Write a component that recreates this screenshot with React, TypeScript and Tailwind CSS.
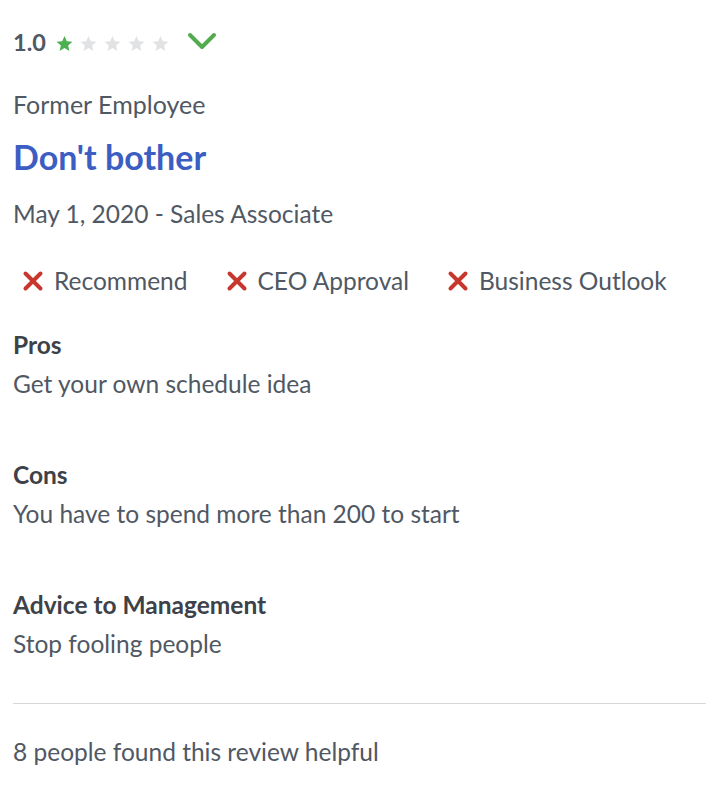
import React from "react";

function Star({ filled }: { filled: boolean }) {
  return (
    <svg width="19" height="19" viewBox="0 0 24 24" className={filled ? "fill-[#4caf50]" : "fill-[#e0e2e4]"}>
      <path d="M12 2.5l2.9 6.6 7.1.6-5.4 4.7 1.6 7-6.2-3.8-6.2 3.8 1.6-7L2 9.7l7.1-.6z" />
    </svg>
  );
}

function Cross() {
  return (
    <svg width="24" height="24" viewBox="0 0 24 24" className="stroke-[#c8372d]" fill="none" strokeWidth="4" strokeLinecap="round">
      <path d="M4.5 4.5l15 15M19.5 4.5l-15 15" />
    </svg>
  );
}

const sections = [
  { title: "Pros", body: "Get your own schedule idea" },
  { title: "Cons", body: "You have to spend more than 200 to start" },
  { title: "Advice to Management", body: "Stop fooling people" },
];

export default function App() {
  return (
    <div className="w-[706px] min-h-[797px] bg-white pl-[13px] pt-[28px] font-['Lato','Liberation_Sans',sans-serif] text-[#505863]">
      <div className="flex items-center h-[30px]">
        <span className="text-[23.5px] font-bold text-[#505863] mr-[9px]">1.0</span>
        <div className="flex items-center gap-[5px]">
          {[0, 1, 2, 3, 4].map((i) => (
            <Star key={i} filled={i === 0} />
          ))}
        </div>
        <svg width="30" height="20" viewBox="0 0 30 20" className="ml-[17px] -mt-[4px]" fill="none" stroke="#52ab4c" strokeWidth="4" strokeLinecap="round" strokeLinejoin="round">
          <path d="M3 4l12 12L27 4" />
        </svg>
      </div>

      <div className="mt-[31px] text-[25px] leading-[30px]">Former Employee</div>
      <h1 className="mt-[18px] text-[34px] leading-[40px] font-bold text-[#3c5dc1]">Don't bother</h1>
      <div className="mt-[22px] text-[24.5px] leading-[30px]">May 1, 2020 - Sales Associate</div>

      <div className="mt-[37px] flex items-center gap-[37px] pl-[8px] text-[24.5px] leading-[30px]">
        {["Recommend", "CEO Approval", "Business Outlook"].map((t) => (
          <div key={t} className="flex items-center gap-[9px]">
            <Cross />
            <span>{t}</span>
          </div>
        ))}
      </div>

      <div className="mt-[34px] flex flex-col gap-[61px]">
        {sections.map((s) => (
          <div key={s.title}>
            <div className="text-[24.5px] leading-[30px] font-bold text-[#3d4249]">{s.title}</div>
            <div className="mt-[9px] text-[24.5px] leading-[30px]">{s.body}</div>
          </div>
        ))}
      </div>

      <hr className="mt-[44px] border-t border-[#d6d8da]" />
      <div className="mt-[33px] text-[24.5px] leading-[30px]">8 people found this review helpful</div>
    </div>
  );
}
